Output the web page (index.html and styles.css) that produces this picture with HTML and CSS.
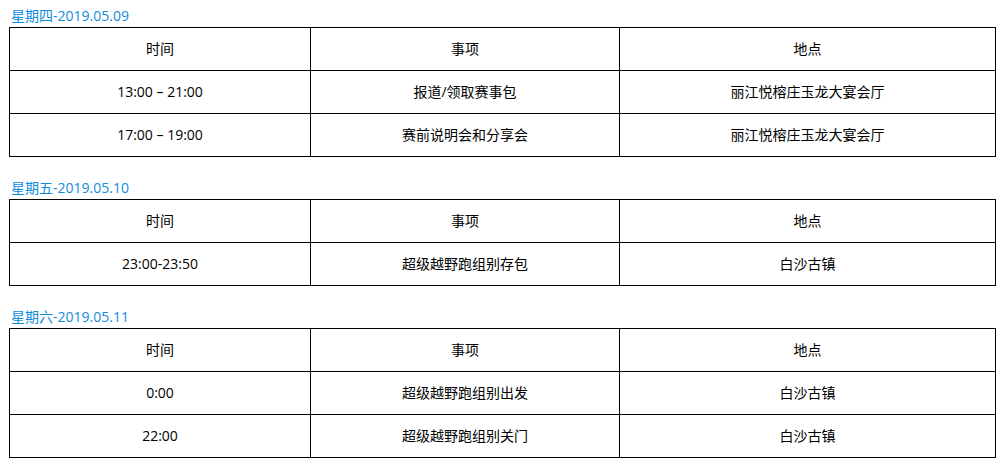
FILE: index.html
```html
<!DOCTYPE html>
<html lang="zh">
<head>
<meta charset="utf-8">
<title>日程</title>
<link rel="stylesheet" href="styles.css">
</head>
<body>
<div class="page">
  <section class="day">
    <h3 class="day-title">星期四-2019.05.09</h3>
    <table class="schedule">
      <colgroup><col class="c1"><col class="c2"><col class="c3"></colgroup>
      <tr><td>时间</td><td>事项</td><td>地点</td></tr>
      <tr><td>13:00 – 21:00</td><td>报道/领取赛事包</td><td>丽江悦榕庄玉龙大宴会厅</td></tr>
      <tr><td>17:00 – 19:00</td><td>赛前说明会和分享会</td><td>丽江悦榕庄玉龙大宴会厅</td></tr>
    </table>
  </section>
  <section class="day">
    <h3 class="day-title">星期五-2019.05.10</h3>
    <table class="schedule">
      <colgroup><col class="c1"><col class="c2"><col class="c3"></colgroup>
      <tr><td>时间</td><td>事项</td><td>地点</td></tr>
      <tr><td>23:00-23:50</td><td>超级越野跑组别存包</td><td>白沙古镇</td></tr>
    </table>
  </section>
  <section class="day">
    <h3 class="day-title">星期六-2019.05.11</h3>
    <table class="schedule">
      <colgroup><col class="c1"><col class="c2"><col class="c3"></colgroup>
      <tr><td>时间</td><td>事项</td><td>地点</td></tr>
      <tr><td>0:00</td><td>超级越野跑组别出发</td><td>白沙古镇</td></tr>
      <tr><td>22:00</td><td>超级越野跑组别关门</td><td>白沙古镇</td></tr>
    </table>
  </section>
</div>
</body>
</html>
```

FILE: styles.css
```css
html, body {
  margin: 0;
  padding: 0;
  background: #ffffff;
}

body {
  font-family: "Open Sans", "Noto Sans CJK SC", sans-serif;
  font-size: 14px;
  color: #000000;
}

.page {
  display: flex;
  flex-direction: column;
  gap: 20px;
  padding: 5px 7px 0 9px;
}

.day-title {
  margin: 0;
  padding-left: 2px;
  height: 22px;
  line-height: 22px;
  font-size: 14px;
  font-weight: normal;
  color: #0e8ddb;
}

.schedule {
  width: 986px;
  border-collapse: collapse;
  table-layout: fixed;
}

.schedule .c1 { width: 301px; }
.schedule .c2 { width: 309px; }
.schedule .c3 { width: 376px; }

.schedule td {
  border: 1px solid #000000;
  height: 42px;
  padding: 0;
  text-align: center;
  vertical-align: middle;
  line-height: 20px;
}
```
